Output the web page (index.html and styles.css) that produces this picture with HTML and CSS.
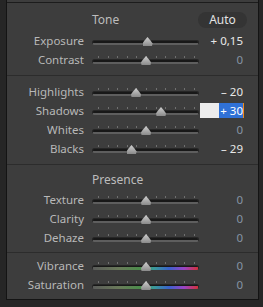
FILE: index.html
```html
<!DOCTYPE html>
<html lang="en">
<head>
  <meta charset="UTF-8" />
  <title>Basic</title>
  <link rel="stylesheet" href="styles.css">
</head>
<body>

<div class="frame">
  <div class="prev"></div>
  <div class="panel">

    <div class="section tone">
      <div class="head">
        <span class="title">Tone</span>
        <span class="auto">Auto</span>
      </div>
      <div class="row">
        <span class="label">Exposure</span>
        <div class="slider plain"><div class="track"></div><div class="thumb" style="left: 55.5px"></div></div>
        <span class="value bright">+ 0,15</span>
      </div>
      <div class="row">
        <span class="label">Contrast</span>
        <div class="slider"><div class="track"></div><div class="thumb" style="left: 54px"></div></div>
        <span class="value">0</span>
      </div>
    </div>

    <div class="section">
      <div class="row">
        <span class="label">Highlights</span>
        <div class="slider"><div class="track"></div><div class="thumb" style="left: 44px"></div></div>
        <span class="value bright">– 20</span>
      </div>
      <div class="row">
        <span class="label">Shadows</span>
        <div class="slider"><div class="track"></div><div class="thumb" style="left: 69px"></div></div>
        <span class="edit"><span class="sel">+ 30</span></span>
      </div>
      <div class="row">
        <span class="label">Whites</span>
        <div class="slider"><div class="track"></div><div class="thumb" style="left: 54px"></div></div>
        <span class="value">0</span>
      </div>
      <div class="row">
        <span class="label">Blacks</span>
        <div class="slider"><div class="track"></div><div class="thumb" style="left: 39.5px"></div></div>
        <span class="value bright">– 29</span>
      </div>
    </div>

    <div class="section presence">
      <div class="head">
        <span class="title">Presence</span>
      </div>
      <div class="row">
        <span class="label">Texture</span>
        <div class="slider"><div class="track"></div><div class="thumb" style="left: 54px"></div></div>
        <span class="value">0</span>
      </div>
      <div class="row">
        <span class="label">Clarity</span>
        <div class="slider"><div class="track"></div><div class="thumb" style="left: 54px"></div></div>
        <span class="value">0</span>
      </div>
      <div class="row">
        <span class="label">Dehaze</span>
        <div class="slider"><div class="track"></div><div class="thumb" style="left: 54px"></div></div>
        <span class="value">0</span>
      </div>
    </div>

    <div class="section color">
      <div class="row">
        <span class="label">Vibrance</span>
        <div class="slider"><div class="track hue"></div><div class="thumb" style="left: 54px"></div></div>
        <span class="value">0</span>
      </div>
      <div class="row">
        <span class="label">Saturation</span>
        <div class="slider"><div class="track hue"></div><div class="thumb" style="left: 54px"></div></div>
        <span class="value">0</span>
      </div>
    </div>

  </div>
</div>

</body>
</html>
```

FILE: styles.css
```css
body {
  margin: 0;
  background: #262626;
  font-family: 'Noto Sans', sans-serif;
  font-size: 11.5px;
  color: #b8b8b8;
}
.frame {
  margin-left: 6px;
  width: 251px;
  border-left: 1px solid #141414;
  border-right: 1px solid #141414;
  border-bottom: 1px solid #141414;
  background: #3d3d3d;
}
.prev {
  height: 2px;
}
.panel {
  border-top: 1px solid #1c1c1c;
}
.section {
  padding: 6px 0;
  border-top: 1px solid #2c2c2c;
}
.section.tone {
  border-top: none;
  padding-top: 0;
}
.section.presence {
  padding-top: 0;
  padding-bottom: 5px;
}
.section.color {
  padding-top: 3px;
  padding-bottom: 5px;
}
.head {
  display: grid;
  grid-template-columns: 77px 107px 36px;
  column-gap: 8px;
  align-items: center;
  line-height: 16px;
}
.tone .head {
  padding: 9px 0 3px;
}
.presence .head {
  padding: 7px 0 2px;
}
.title {
  grid-column: 2;
  color: #bcbcbc;
  font-size: 12px;
}
.auto {
  grid-column: 3;
  justify-self: end;
  width: 49px;
  margin-right: -4px;
  height: 16px;
  border-radius: 8px;
  background: #343434;
  color: #e2e2e2;
  text-align: center;
  font-size: 12px;
}
.row {
  display: grid;
  grid-template-columns: 77px 107px 36px;
  column-gap: 8px;
  height: 19px;
  line-height: 19px;
}
.label {
  text-align: right;
  color: #b8b8b8;
}
.value {
  text-align: right;
  color: #8593a3;
}
.value.bright {
  color: #e8e8e8;
}
.slider {
  position: relative;
  height: 19px;
}
.track {
  margin-top: 9px;
  height: 2px;
  background: #181818;
  border: 1px solid #262626;
  border-bottom: 2px solid #5e5e5e;
  border-radius: 3px;
}
.track.hue {
  border-bottom: 2px solid transparent;
  background:
    linear-gradient(#181818, #181818) top / 100% 2px no-repeat,
    linear-gradient(90deg, #5a5a5a 0%, #6a7a5a 25%, #4b8d4b 45%, #3a9a98 58%, #3a62cc 72%, #9a44c4 86%, #d83030 100%);
  background-origin: border-box;
}
.slider::before {
  content: "";
  position: absolute;
  left: 6px;
  top: 6px;
  width: 98px;
  height: 2px;
  background: repeating-linear-gradient(90deg, #707070 0 1px, transparent 1px 9.6px);
}
.slider.plain::before {
  display: none;
}
.thumb {
  position: absolute;
  top: 6px;
  width: 10px;
  height: 9px;
  margin-left: -5px;
  background: linear-gradient(#d0d0d0, #8a8a8a);
  clip-path: polygon(50% 0, 80% 40%, 100% 70%, 95% 100%, 5% 100%, 0 70%, 20% 40%);
}
.edit {
  justify-self: end;
  width: 44px;
  height: 15px;
  margin: 2px -1px 0 0;
  background: #ececec;
  line-height: 15px;
  text-align: right;
  white-space: nowrap;
  overflow: hidden;
}
.sel {
  display: inline-block;
  height: 15px;
  padding: 0 0 0 1px;
  background: #3071d6;
  color: #ffffff;
  border-right: 1px solid #f08c1c;
}
```
